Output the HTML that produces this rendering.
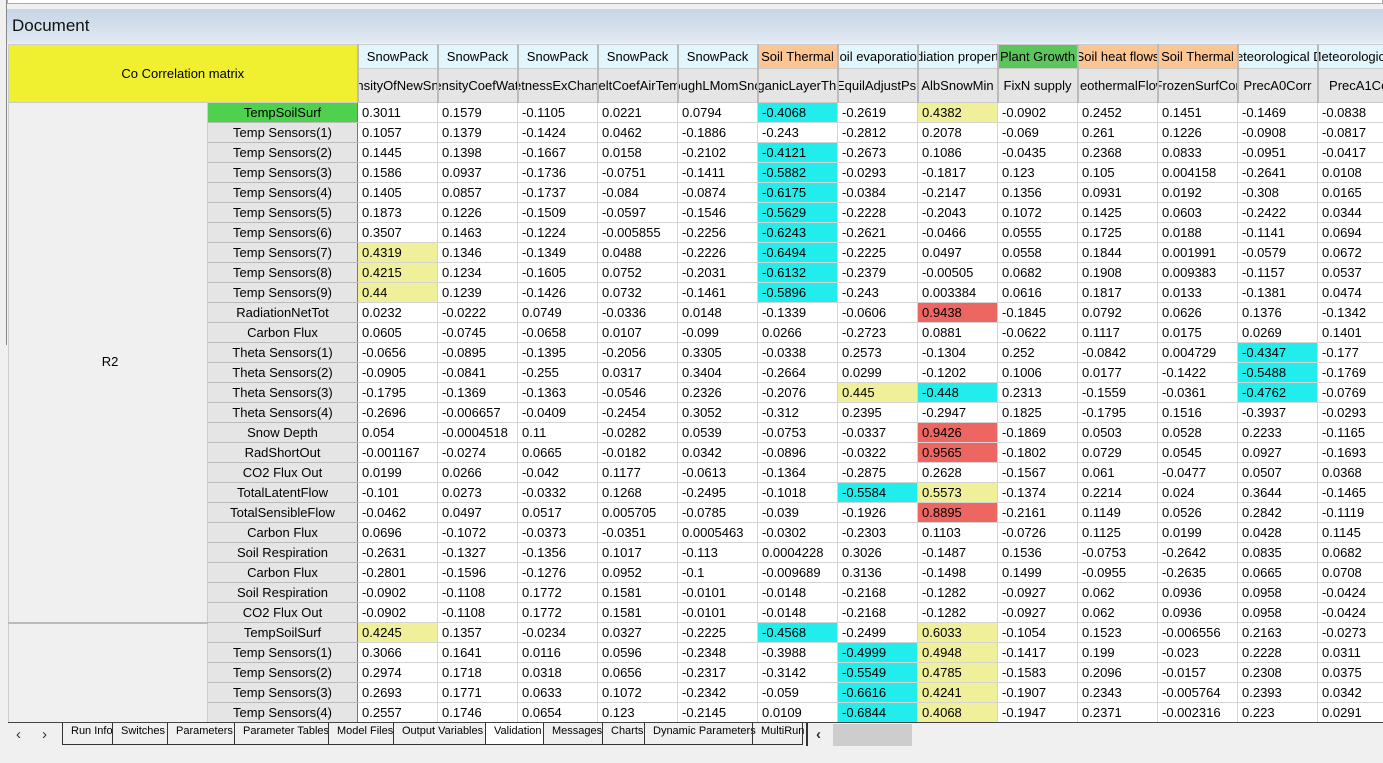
<!DOCTYPE html>
<html><head><meta charset="utf-8"><style>
*{box-sizing:border-box;margin:0;padding:0}
body{width:1383px;height:763px;overflow:hidden;background:#f0f0f0;font-family:"Liberation Sans",sans-serif;font-size:13px;color:#000;position:relative}
.top{position:absolute;left:7px;top:0;width:1376px;height:4px;background:#fff;border:1px solid #aab;border-top:none}
.title{position:absolute;left:7px;top:9px;width:1376px;height:34px;background:linear-gradient(#c5d4e6,#e2eaf3);font-size:17px;padding:7px 0 0 5px;color:#111}
.lb{position:absolute;left:6px;top:0;width:1px;height:345px;background:#888}
.grid{position:absolute;left:8px;top:44px;width:1375px;height:679px;overflow:hidden;background:#fff}
table{border-collapse:collapse;table-layout:fixed;width:1400px}
td{height:20px;border:1px solid #d4d4d4;padding:0 0 0 4px;white-space:nowrap;overflow:hidden;font-size:13px;line-height:18px}
td.l{background:#e5e5e5;text-align:center;padding:0;border:1px solid #fff;border-right:1px solid #777;border-bottom:1px solid #bbb}
td.g{background:#4ed24e}
.C{background:#22eded}.Y{background:#f0f09a}.R{background:#ee6662}
tr.h1 td{height:24px;text-align:center;padding:0;font-size:13px;border:1px solid #ccc;border-right:2px solid #bbb}
tr.h2 td{height:34px;background:#e5e5e5;text-align:center;padding:0;font-size:13px;border:1px solid #ccc;border-right:2px solid #bbb}
.s{background:#e2f6fd}.o{background:#fcc591}.p{background:#5cc65c}
.cl{display:flex;justify-content:center;overflow:hidden;white-space:nowrap}
td.corr{background:#f0f030;text-align:center;border:1px solid #aaa;border-bottom:2px solid #999}
td.r2{background:#f0f0f0;border:1px solid #ccc;border-bottom:2px solid #bbb;text-align:center;vertical-align:middle}
.tabs{position:absolute;left:8px;top:722px;width:1375px;height:24px;background:#f0f0f0;border-top:1px solid #444}
.tab{position:absolute;top:0;height:22px;font-size:11px;padding:2px 0 0 8px;border-left:1px solid #333;border-right:1px solid #333;border-bottom:1px solid #333;white-space:nowrap}
.arr{position:absolute;top:3px;font-size:15px;color:#333}
</style></head><body>
<div class="top"></div>
<div class="lb"></div>
<div class="title">Document</div>
<div class="grid"><table>
<colgroup><col style="width:199px"><col style="width:150px"><col style="width:80px"><col style="width:80px"><col style="width:80px"><col style="width:80px"><col style="width:80px"><col style="width:80px"><col style="width:80px"><col style="width:80px"><col style="width:80px"><col style="width:80px"><col style="width:80px"><col style="width:80px"><col style="width:91px"></colgroup>
<tr class="h1"><td class="corr" colspan="2" rowspan="2">Co Correlation matrix</td>
<td class="s"><div class="cl">SnowPack</div></td><td class="s"><div class="cl">SnowPack</div></td><td class="s"><div class="cl">SnowPack</div></td><td class="s"><div class="cl">SnowPack</div></td><td class="s"><div class="cl">SnowPack</div></td><td class="o"><div class="cl">Soil Thermal</div></td><td class="s"><div class="cl">Soil evaporation</div></td><td class="s"><div class="cl">Radiation properties</div></td><td class="p"><div class="cl">Plant Growth</div></td><td class="o"><div class="cl">Soil heat flows</div></td><td class="o"><div class="cl">Soil Thermal</div></td><td class="s"><div class="cl">Meteorological Da</div></td><td class="s"><div class="cl">Meteorological Da</div></td></tr>
<tr class="h2"><td><div class="cl">DensityOfNewSnow</div></td><td><div class="cl">DensityCoefWater</div></td><td><div class="cl">WetnessExChange</div></td><td><div class="cl">MeltCoefAirTemp</div></td><td><div class="cl">RoughLMomSnow</div></td><td><div class="cl">OrganicLayerThick</div></td><td><div class="cl">EquilAdjustPsi</div></td><td><div class="cl">AlbSnowMin</div></td><td><div class="cl">FixN supply</div></td><td><div class="cl">GeothermalFlow</div></td><td><div class="cl">&nbsp;FrozenSurfCorr</div></td><td><div class="cl">PrecA0Corr</div></td><td><div class="cl">PrecA1Corr</div></td></tr>
<tr><td class="r2" rowspan="26">R2</td><td class="l g">TempSoilSurf</td><td>0.3011</td><td>0.1579</td><td>-0.1105</td><td>0.0221</td><td>0.0794</td><td class="C">-0.4068</td><td>-0.2619</td><td class="Y">0.4382</td><td>-0.0902</td><td>0.2452</td><td>0.1451</td><td>-0.1469</td><td>-0.0838</td></tr>
<tr><td class="l">Temp Sensors(1)</td><td>0.1057</td><td>0.1379</td><td>-0.1424</td><td>0.0462</td><td>-0.1886</td><td>-0.243</td><td>-0.2812</td><td>0.2078</td><td>-0.069</td><td>0.261</td><td>0.1226</td><td>-0.0908</td><td>-0.0817</td></tr>
<tr><td class="l">Temp Sensors(2)</td><td>0.1445</td><td>0.1398</td><td>-0.1667</td><td>0.0158</td><td>-0.2102</td><td class="C">-0.4121</td><td>-0.2673</td><td>0.1086</td><td>-0.0435</td><td>0.2368</td><td>0.0833</td><td>-0.0951</td><td>-0.0417</td></tr>
<tr><td class="l">Temp Sensors(3)</td><td>0.1586</td><td>0.0937</td><td>-0.1736</td><td>-0.0751</td><td>-0.1411</td><td class="C">-0.5882</td><td>-0.0293</td><td>-0.1817</td><td>0.123</td><td>0.105</td><td>0.004158</td><td>-0.2641</td><td>0.0108</td></tr>
<tr><td class="l">Temp Sensors(4)</td><td>0.1405</td><td>0.0857</td><td>-0.1737</td><td>-0.084</td><td>-0.0874</td><td class="C">-0.6175</td><td>-0.0384</td><td>-0.2147</td><td>0.1356</td><td>0.0931</td><td>0.0192</td><td>-0.308</td><td>0.0165</td></tr>
<tr><td class="l">Temp Sensors(5)</td><td>0.1873</td><td>0.1226</td><td>-0.1509</td><td>-0.0597</td><td>-0.1546</td><td class="C">-0.5629</td><td>-0.2228</td><td>-0.2043</td><td>0.1072</td><td>0.1425</td><td>0.0603</td><td>-0.2422</td><td>0.0344</td></tr>
<tr><td class="l">Temp Sensors(6)</td><td>0.3507</td><td>0.1463</td><td>-0.1224</td><td>-0.005855</td><td>-0.2256</td><td class="C">-0.6243</td><td>-0.2621</td><td>-0.0466</td><td>0.0555</td><td>0.1725</td><td>0.0188</td><td>-0.1141</td><td>0.0694</td></tr>
<tr><td class="l">Temp Sensors(7)</td><td class="Y">0.4319</td><td>0.1346</td><td>-0.1349</td><td>0.0488</td><td>-0.2226</td><td class="C">-0.6494</td><td>-0.2225</td><td>0.0497</td><td>0.0558</td><td>0.1844</td><td>0.001991</td><td>-0.0579</td><td>0.0672</td></tr>
<tr><td class="l">Temp Sensors(8)</td><td class="Y">0.4215</td><td>0.1234</td><td>-0.1605</td><td>0.0752</td><td>-0.2031</td><td class="C">-0.6132</td><td>-0.2379</td><td>-0.00505</td><td>0.0682</td><td>0.1908</td><td>0.009383</td><td>-0.1157</td><td>0.0537</td></tr>
<tr><td class="l">Temp Sensors(9)</td><td class="Y">0.44</td><td>0.1239</td><td>-0.1426</td><td>0.0732</td><td>-0.1461</td><td class="C">-0.5896</td><td>-0.243</td><td>0.003384</td><td>0.0616</td><td>0.1817</td><td>0.0133</td><td>-0.1381</td><td>0.0474</td></tr>
<tr><td class="l">RadiationNetTot</td><td>0.0232</td><td>-0.0222</td><td>0.0749</td><td>-0.0336</td><td>0.0148</td><td>-0.1339</td><td>-0.0606</td><td class="R">0.9438</td><td>-0.1845</td><td>0.0792</td><td>0.0626</td><td>0.1376</td><td>-0.1342</td></tr>
<tr><td class="l">Carbon Flux</td><td>0.0605</td><td>-0.0745</td><td>-0.0658</td><td>0.0107</td><td>-0.099</td><td>0.0266</td><td>-0.2723</td><td>0.0881</td><td>-0.0622</td><td>0.1117</td><td>0.0175</td><td>0.0269</td><td>0.1401</td></tr>
<tr><td class="l">Theta Sensors(1)</td><td>-0.0656</td><td>-0.0895</td><td>-0.1395</td><td>-0.2056</td><td>0.3305</td><td>-0.0338</td><td>0.2573</td><td>-0.1304</td><td>0.252</td><td>-0.0842</td><td>0.004729</td><td class="C">-0.4347</td><td>-0.177</td></tr>
<tr><td class="l">Theta Sensors(2)</td><td>-0.0905</td><td>-0.0841</td><td>-0.255</td><td>0.0317</td><td>0.3404</td><td>-0.2664</td><td>0.0299</td><td>-0.1202</td><td>0.1006</td><td>0.0177</td><td>-0.1422</td><td class="C">-0.5488</td><td>-0.1769</td></tr>
<tr><td class="l">Theta Sensors(3)</td><td>-0.1795</td><td>-0.1369</td><td>-0.1363</td><td>-0.0546</td><td>0.2326</td><td>-0.2076</td><td class="Y">0.445</td><td class="C">-0.448</td><td>0.2313</td><td>-0.1559</td><td>-0.0361</td><td class="C">-0.4762</td><td>-0.0769</td></tr>
<tr><td class="l">Theta Sensors(4)</td><td>-0.2696</td><td>-0.006657</td><td>-0.0409</td><td>-0.2454</td><td>0.3052</td><td>-0.312</td><td>0.2395</td><td>-0.2947</td><td>0.1825</td><td>-0.1795</td><td>0.1516</td><td>-0.3937</td><td>-0.0293</td></tr>
<tr><td class="l">Snow Depth</td><td>0.054</td><td>-0.0004518</td><td>0.11</td><td>-0.0282</td><td>0.0539</td><td>-0.0753</td><td>-0.0337</td><td class="R">0.9426</td><td>-0.1869</td><td>0.0503</td><td>0.0528</td><td>0.2233</td><td>-0.1165</td></tr>
<tr><td class="l">RadShortOut</td><td>-0.001167</td><td>-0.0274</td><td>0.0665</td><td>-0.0182</td><td>0.0342</td><td>-0.0896</td><td>-0.0322</td><td class="R">0.9565</td><td>-0.1802</td><td>0.0729</td><td>0.0545</td><td>0.0927</td><td>-0.1693</td></tr>
<tr><td class="l">CO2 Flux Out</td><td>0.0199</td><td>0.0266</td><td>-0.042</td><td>0.1177</td><td>-0.0613</td><td>-0.1364</td><td>-0.2875</td><td>0.2628</td><td>-0.1567</td><td>0.061</td><td>-0.0477</td><td>0.0507</td><td>0.0368</td></tr>
<tr><td class="l">TotalLatentFlow</td><td>-0.101</td><td>0.0273</td><td>-0.0332</td><td>0.1268</td><td>-0.2495</td><td>-0.1018</td><td class="C">-0.5584</td><td class="Y">0.5573</td><td>-0.1374</td><td>0.2214</td><td>0.024</td><td>0.3644</td><td>-0.1465</td></tr>
<tr><td class="l">TotalSensibleFlow</td><td>-0.0462</td><td>0.0497</td><td>0.0517</td><td>0.005705</td><td>-0.0785</td><td>-0.039</td><td>-0.1926</td><td class="R">0.8895</td><td>-0.2161</td><td>0.1149</td><td>0.0526</td><td>0.2842</td><td>-0.1119</td></tr>
<tr><td class="l">Carbon Flux</td><td>0.0696</td><td>-0.1072</td><td>-0.0373</td><td>-0.0351</td><td>0.0005463</td><td>-0.0302</td><td>-0.2303</td><td>0.1103</td><td>-0.0726</td><td>0.1125</td><td>0.0199</td><td>0.0428</td><td>0.1145</td></tr>
<tr><td class="l">Soil Respiration</td><td>-0.2631</td><td>-0.1327</td><td>-0.1356</td><td>0.1017</td><td>-0.113</td><td>0.0004228</td><td>0.3026</td><td>-0.1487</td><td>0.1536</td><td>-0.0753</td><td>-0.2642</td><td>0.0835</td><td>0.0682</td></tr>
<tr><td class="l">Carbon Flux</td><td>-0.2801</td><td>-0.1596</td><td>-0.1276</td><td>0.0952</td><td>-0.1</td><td>-0.009689</td><td>0.3136</td><td>-0.1498</td><td>0.1499</td><td>-0.0955</td><td>-0.2635</td><td>0.0665</td><td>0.0708</td></tr>
<tr><td class="l">Soil Respiration</td><td>-0.0902</td><td>-0.1108</td><td>0.1772</td><td>0.1581</td><td>-0.0101</td><td>-0.0148</td><td>-0.2168</td><td>-0.1282</td><td>-0.0927</td><td>0.062</td><td>0.0936</td><td>0.0958</td><td>-0.0424</td></tr>
<tr><td class="l">CO2 Flux Out</td><td>-0.0902</td><td>-0.1108</td><td>0.1772</td><td>0.1581</td><td>-0.0101</td><td>-0.0148</td><td>-0.2168</td><td>-0.1282</td><td>-0.0927</td><td>0.062</td><td>0.0936</td><td>0.0958</td><td>-0.0424</td></tr>
<tr><td class="r2" rowspan="5"></td><td class="l">TempSoilSurf</td><td class="Y">0.4245</td><td>0.1357</td><td>-0.0234</td><td>0.0327</td><td>-0.2225</td><td class="C">-0.4568</td><td>-0.2499</td><td class="Y">0.6033</td><td>-0.1054</td><td>0.1523</td><td>-0.006556</td><td>0.2163</td><td>-0.0273</td></tr>
<tr><td class="l">Temp Sensors(1)</td><td>0.3066</td><td>0.1641</td><td>0.0116</td><td>0.0596</td><td>-0.2348</td><td>-0.3988</td><td class="C">-0.4999</td><td class="Y">0.4948</td><td>-0.1417</td><td>0.199</td><td>-0.023</td><td>0.2228</td><td>0.0311</td></tr>
<tr><td class="l">Temp Sensors(2)</td><td>0.2974</td><td>0.1718</td><td>0.0318</td><td>0.0656</td><td>-0.2317</td><td>-0.3142</td><td class="C">-0.5549</td><td class="Y">0.4785</td><td>-0.1583</td><td>0.2096</td><td>-0.0157</td><td>0.2308</td><td>0.0375</td></tr>
<tr><td class="l">Temp Sensors(3)</td><td>0.2693</td><td>0.1771</td><td>0.0633</td><td>0.1072</td><td>-0.2342</td><td>-0.059</td><td class="C">-0.6616</td><td class="Y">0.4241</td><td>-0.1907</td><td>0.2343</td><td>-0.005764</td><td>0.2393</td><td>0.0342</td></tr>
<tr><td class="l">Temp Sensors(4)</td><td>0.2557</td><td>0.1746</td><td>0.0654</td><td>0.123</td><td>-0.2145</td><td>0.0109</td><td class="C">-0.6844</td><td class="Y">0.4068</td><td>-0.1947</td><td>0.2371</td><td>-0.002316</td><td>0.223</td><td>0.0291</td></tr>
</table></div>
<div class="tabs">
<span class="arr" style="left:8px">&#8249;</span><span class="arr" style="left:34px">&#8250;</span>
<div class="tab" style="left:54px;width:51px">Run Info</div>
<div class="tab" style="left:104px;width:56px">Switches</div>
<div class="tab" style="left:159px;width:68px">Parameters</div>
<div class="tab" style="left:226px;width:95px">Parameter Tables</div>
<div class="tab" style="left:320px;width:66px">Model Files</div>
<div class="tab" style="left:385px;width:93px">Output Variables</div>
<div class="tab" style="left:477px;width:59px;background:#fff">Validation</div>
<div class="tab" style="left:535px;width:60px">Messages</div>
<div class="tab" style="left:594px;width:43px">Charts</div>
<div class="tab" style="left:636px;width:109px">Dynamic Parameters</div>
<div class="tab" style="left:744px;width:51px">MultiRun</div>
<div style="position:absolute;left:798px;top:0;width:2px;height:23px;background:#333"></div>
<span class="arr" style="left:808px;font-weight:bold">&#8249;</span>
<div style="position:absolute;left:825px;top:1px;width:79px;height:22px;background:#cdcdcd"></div>
</div>
</body></html>
